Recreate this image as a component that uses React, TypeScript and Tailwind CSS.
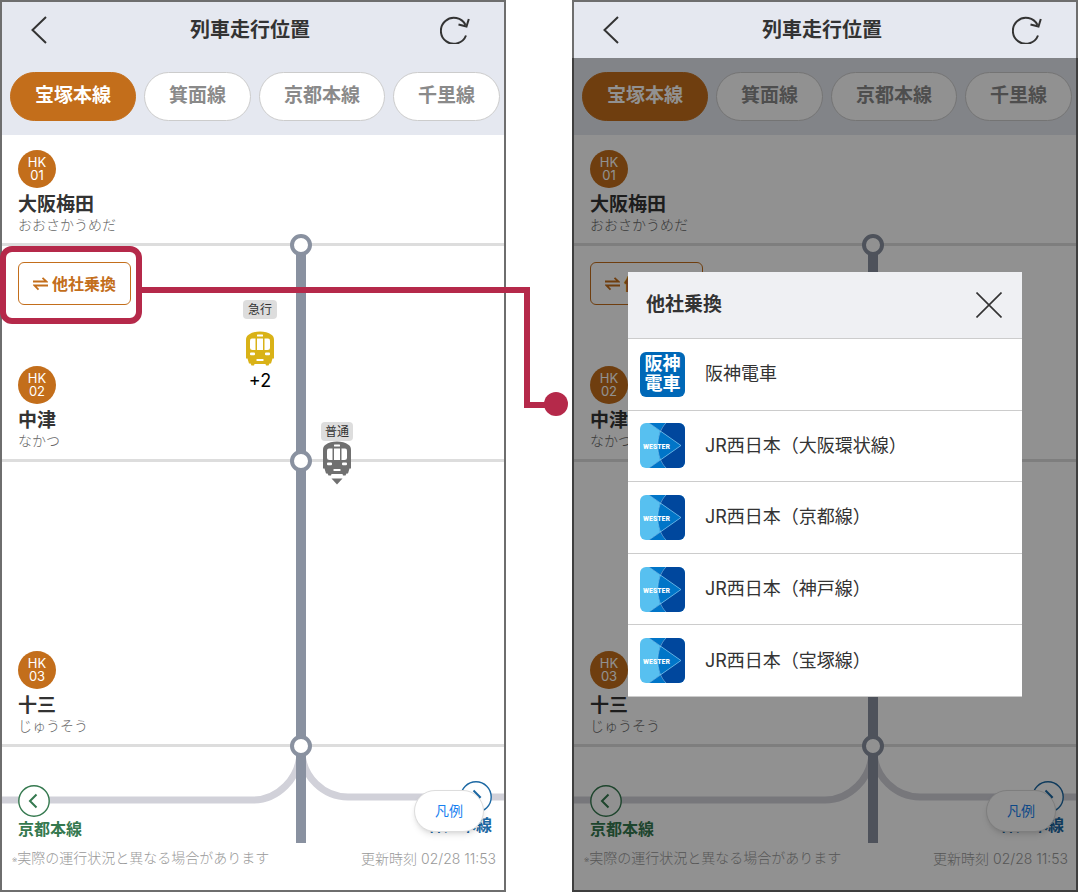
import { useState } from "react";

const tabs = ["宝塚本線", "箕面線", "京都本線", "千里線"];

const transfers = [
  { name: "阪神電車", logo: "hanshin" },
  { name: "JR西日本（大阪環状線）", logo: "wester" },
  { name: "JR西日本（京都線）", logo: "wester" },
  { name: "JR西日本（神戸線）", logo: "wester" },
  { name: "JR西日本（宝塚線）", logo: "wester" },
];

const TrainIcon = ({ arrow = false }: { arrow?: boolean }) => (
  <svg width="28" height="44" viewBox="0 0 28 44" fill="currentColor" aria-hidden="true">
    <path d="M0 9C0 7 .6 5 2.600 3.800C5.500 1.400 9.500.5 14 .5C18.500.5 22.500 1.400 25.400 3.800C27.400 5 28 7 28 9V27.500H26.500L25 32.500H23.500L22.500 34.500H20L19.500 33H8.500L8 34.500H5.500L4.500 32.500H3L1.500 27.500H0Z" />
    <g fill="#fff">
      <rect x="11" y="3.500" width="6" height="2" rx=".5" />
      <path d="M4 9.500Q4 7.500 6 7.500H9.500V19H6.500Q4 19 4 17Z" />
      <path d="M24 9.500Q24 7.500 22 7.500H18.500V19H21.500Q24 19 24 17Z" />
      <rect x="11" y="7.500" width="6" height="11.500" />
      <rect x="4" y="21.500" width="5" height="2.800" rx="1" />
      <rect x="19" y="21.500" width="5" height="2.800" rx="1" />
      <rect x="10.500" y="28" width="7" height="2" rx=".5" />
    </g>
    {arrow && <path d="M8.500 37.500H19.500L14 43.500Z" />}
  </svg>
);

const HanshinLogo = () => (
  <span className="flex size-[45px] shrink-0 flex-col items-center justify-center rounded-md bg-[#0068b7] text-lg leading-5 font-bold text-white">
    <span>阪神</span>
    <span>電車</span>
  </span>
);

const WesterLogo = () => (
  <svg width="45" height="45" viewBox="0 0 45 45" className="shrink-0 overflow-hidden rounded-md" aria-hidden="true">
    <rect width="45" height="45" fill="#57c0f0" />
    <path d="M9 0H45V45H9L41 22.500Z" fill="#00479d" />
    <path d="M9 0H26C22.500 3 20.500 7 20 8Z" fill="#0075c8" />
    <path d="M9 45H26C22.500 42 20.500 38 20 37Z" fill="#0075c8" />
    <path d="M20 8L41 22.500L20 37C17 28 17 17 20 8Z" fill="#0075c8" />
    <path d="M9 0L41 22.500L9 45M26 0C15 11 15 34 26 45" fill="none" stroke="#8fcdf2" strokeWidth=".6" />
    <text x="3" y="26" fill="#fff" fontSize="10" fontWeight="700" textAnchor="start" fontFamily="Roboto Condensed, Roboto, sans-serif">
      <tspan fontSize="8">WESTER</tspan>
    </text>
  </svg>
);

const Train = ({ type, arrow }: { type: string; arrow?: boolean }) => (
  <>
    <span className="rounded bg-[#dddddd] px-1 text-xs leading-[19px] text-[#333333]">
      {type}
    </span>
    <TrainIcon arrow={arrow} />
  </>
);

const Station = ({ no, name, kana }: { no: string; name: string; kana: string }) => (
  <div className="mt-auto pb-[11px] pl-4">
    <div className="flex size-[38px] flex-col items-center justify-center rounded-full bg-[#c36e1b] text-[13px] leading-[13px] text-white">
      <span>HK</span>
      <span>{no}</span>
    </div>
    <h2 className="mt-1 text-[19px] leading-[26px] font-bold text-[#333333]">{name}</h2>
    <p className="text-sm leading-[14px] font-light text-[#666666]">{kana}</p>
  </div>
);

// white circle where the rail crosses a station
const Node = () => (
  <span className="absolute -bottom-[13px] left-72 z-10 size-[22px] rounded-full border-4 border-[#8991a0] bg-white" />
);

const RouteMap = () => (
  <main className="relative flex-1">
    {/* rail */}
    <div className="absolute top-[110px] left-[294px] z-[5] h-[598px] w-2.5 bg-[#8991a0]" />

    <section className="relative flex h-[111px] flex-col border-b-[3px] border-[#dddddd]">
      <Station no="01" name="大阪梅田" kana="おおさかうめだ" />
      <Node />
    </section>

    <section className="relative flex h-[216px] flex-col border-b-[3px] border-[#dddddd]">
      <button className="mt-4 ml-4 flex h-[43px] w-[113px] items-center justify-center gap-1 rounded-md border border-[#c36e1b] text-base font-bold text-[#c36e1b]">
        <svg width="15" height="14" viewBox="0 0 15 14" fill="none" stroke="currentColor" strokeWidth="1.800" aria-hidden="true">
          <path d="M0 4.500H13.500L9.500 .8M15 8.500H1.500L5.500 12.700" />
        </svg>
        他社乗換
      </button>
      <Station no="02" name="中津" kana="なかつ" />
      <Node />
      <div className="absolute top-[54px] left-[241px] flex flex-col items-center text-[#d9b217]">
        <span className="mb-3 flex flex-col rounded bg-[#dddddd] px-[5px] text-xs leading-[19px] text-[#333333]">
          急行
        </span>
        <span className="h-[38px]">
          <TrainIcon />
        </span>
        <span className="text-lg leading-6 text-black">+2</span>
      </div>
    </section>

    <section className="relative flex h-[285px] flex-col border-b-[3px] border-[#dddddd]">
      <div className="absolute -top-10 left-[319px] flex flex-col items-center text-[#707070]">
        <Train type="普通" arrow />
      </div>
      <Station no="03" name="十三" kana="じゅうそう" />
      <Node />
    </section>

    <section className="relative h-[143px]">
      {/* branch lines */}
      <svg className="absolute inset-0 size-full" fill="none" stroke="#d1d1d9" strokeWidth="7" aria-hidden="true">
        <path d="M0 53H251C275 53 298 32 298 4" />
        <path d="M300 4C300 30 322 50 346 50H3000" />
      </svg>
      <div className="relative flex justify-between pt-[34px] pr-3 pl-4">
        <a href="#kyoto" className="pt-1 text-base leading-6 font-bold text-[#35794f]">
          <svg width="32" height="32" viewBox="0 0 32 32" fill="none" stroke="currentColor" aria-hidden="true">
            <circle cx="16" cy="16" r="15.200" fill="#fff" strokeWidth="1.400" />
            <path d="M18.500 9.500L12 16L18.500 22.500" strokeWidth="2" />
          </svg>
          京都本線
        </a>
        <a href="#kobe" className="flex flex-col items-end text-base leading-6 font-bold text-[#1c68a3]">
          <svg width="32" height="32" viewBox="0 0 32 32" fill="none" stroke="currentColor" aria-hidden="true">
            <circle cx="16" cy="16" r="15.200" fill="#fff" strokeWidth="1.400" />
            <path d="M13.500 9.500L20 16L13.500 22.500" strokeWidth="2" />
          </svg>
          神戸本線
        </a>
      </div>
      <button className="absolute top-[43px] right-5 h-[42px] w-[70px] rounded-full border border-[#dddddd] bg-white text-sm text-[#1780f0] shadow-md">
        凡例
      </button>
      <footer className="absolute right-0 bottom-5 left-0 flex items-center justify-between pr-2 pl-2.5 text-sm leading-5 font-light text-[#999999]">
        <p>
          <span className="text-[9px]">※</span>実際の運行状況と異なる場合があります
        </p>
        <p>更新時刻 02/28 11:53</p>
      </footer>
    </section>
  </main>
);

const Phone = ({ modal, onClose }: { modal?: boolean; onClose?: () => void }) => {
  const [active, setActive] = useState(tabs[0]);

  return (
    <div className="relative flex min-w-0 flex-1 flex-col border-2 border-[#6e6e6e] bg-white">
      {/* header */}
      <header className="flex h-14 items-center justify-between bg-[#e5e8f0] pr-[34px] pl-7 text-[#333333]">
        <button aria-label="戻る">
          <svg width="18" height="28" viewBox="0 0 18 28" fill="none" stroke="currentColor" strokeWidth="2" aria-hidden="true">
            <path d="M16 1L2.500 14L16 27" />
          </svg>
        </button>
        <h1 className="pl-3 text-xl font-bold">列車走行位置</h1>
        <button aria-label="更新">
          <svg width="30" height="28" viewBox="0 0 30 28" fill="none" stroke="currentColor" strokeWidth="2" aria-hidden="true">
            <path d="M26 19.500A13 13 0 1 1 25.500 9" />
            <path d="M18.500 8.500L26.500 10.500L28.800 3" />
          </svg>
        </button>
      </header>
      {/* lines */}
      <nav className="flex h-[77px] gap-2 overflow-hidden bg-[#e5e8f0] px-2 pt-3.5">
        {tabs.map((tab) => (
          <button
            key={tab}
            onClick={() => setActive(tab)}
            className={`h-[49px] shrink-0 rounded-full px-6 text-[19px] font-bold border ${
              active === tab
                ? "border-[#c36e1b] bg-[#c36e1b] text-white"
                : "border-[#cccccc] bg-white text-[#8a8a8a]"
            }`}
          >
            {tab}
          </button>
        ))}
      </nav>
      <RouteMap />

      {/* transfer dialog */}
      {modal && (
        <div className="absolute top-14 -right-0.5 -bottom-0.5 -left-0.5 z-20 bg-black/43 px-14 pt-[214px]">
          <div role="dialog" aria-label="他社乗換" className="bg-white text-[#333333]">
            <div className="flex h-[67px] items-center justify-between border-b border-[#cccccc] bg-[#eff0f3] pr-5 pl-[18px]">
              <h2 className="text-[19px] font-bold">他社乗換</h2>
              <button aria-label="閉じる" onClick={onClose}>
                <svg width="26" height="26" viewBox="0 0 26 26" stroke="currentColor" strokeWidth="1.600" aria-hidden="true">
                  <path d="M.5 .5L25.500 25.500M25.500 .5L.5 25.500" />
                </svg>
              </button>
            </div>
            <ul className="grid h-[358px] auto-rows-fr">
              {transfers.map((t) => (
                <li key={t.name} className="border-b border-[#cccccc]">
                  <a href="#transfer" className="flex h-full items-center gap-5 pl-3 text-lg">
                    {t.logo === "hanshin" ? <HanshinLogo /> : <WesterLogo />}
                    {t.name}
                  </a>
                </li>
              ))}
            </ul>
          </div>
        </div>
      )}
    </div>
  );
};

const App = () => {
  const [opened, setOpened] = useState(true);

  return (
    <div
      lang="ja"
      className="relative flex min-h-screen gap-[66px] bg-white font-['Inter','Noto_Sans_CJK_JP',sans-serif]"
    >
      <Phone />
      <Phone modal={opened} onClose={() => setOpened(false)} />

      {/* callout from the transfer button to the dialog */}
      <svg className="pointer-events-none absolute top-0 left-0 z-30" width="570" height="430" fill="none" stroke="#b5294a" strokeWidth="6" aria-hidden="true">
        <rect x="3" y="249" width="136" height="72" rx="9" />
        <path d="M139 290H527V405H556" />
        <circle cx="556" cy="404" r="12" fill="#b5294a" stroke="none" />
      </svg>
    </div>
  );
};

export default App;
